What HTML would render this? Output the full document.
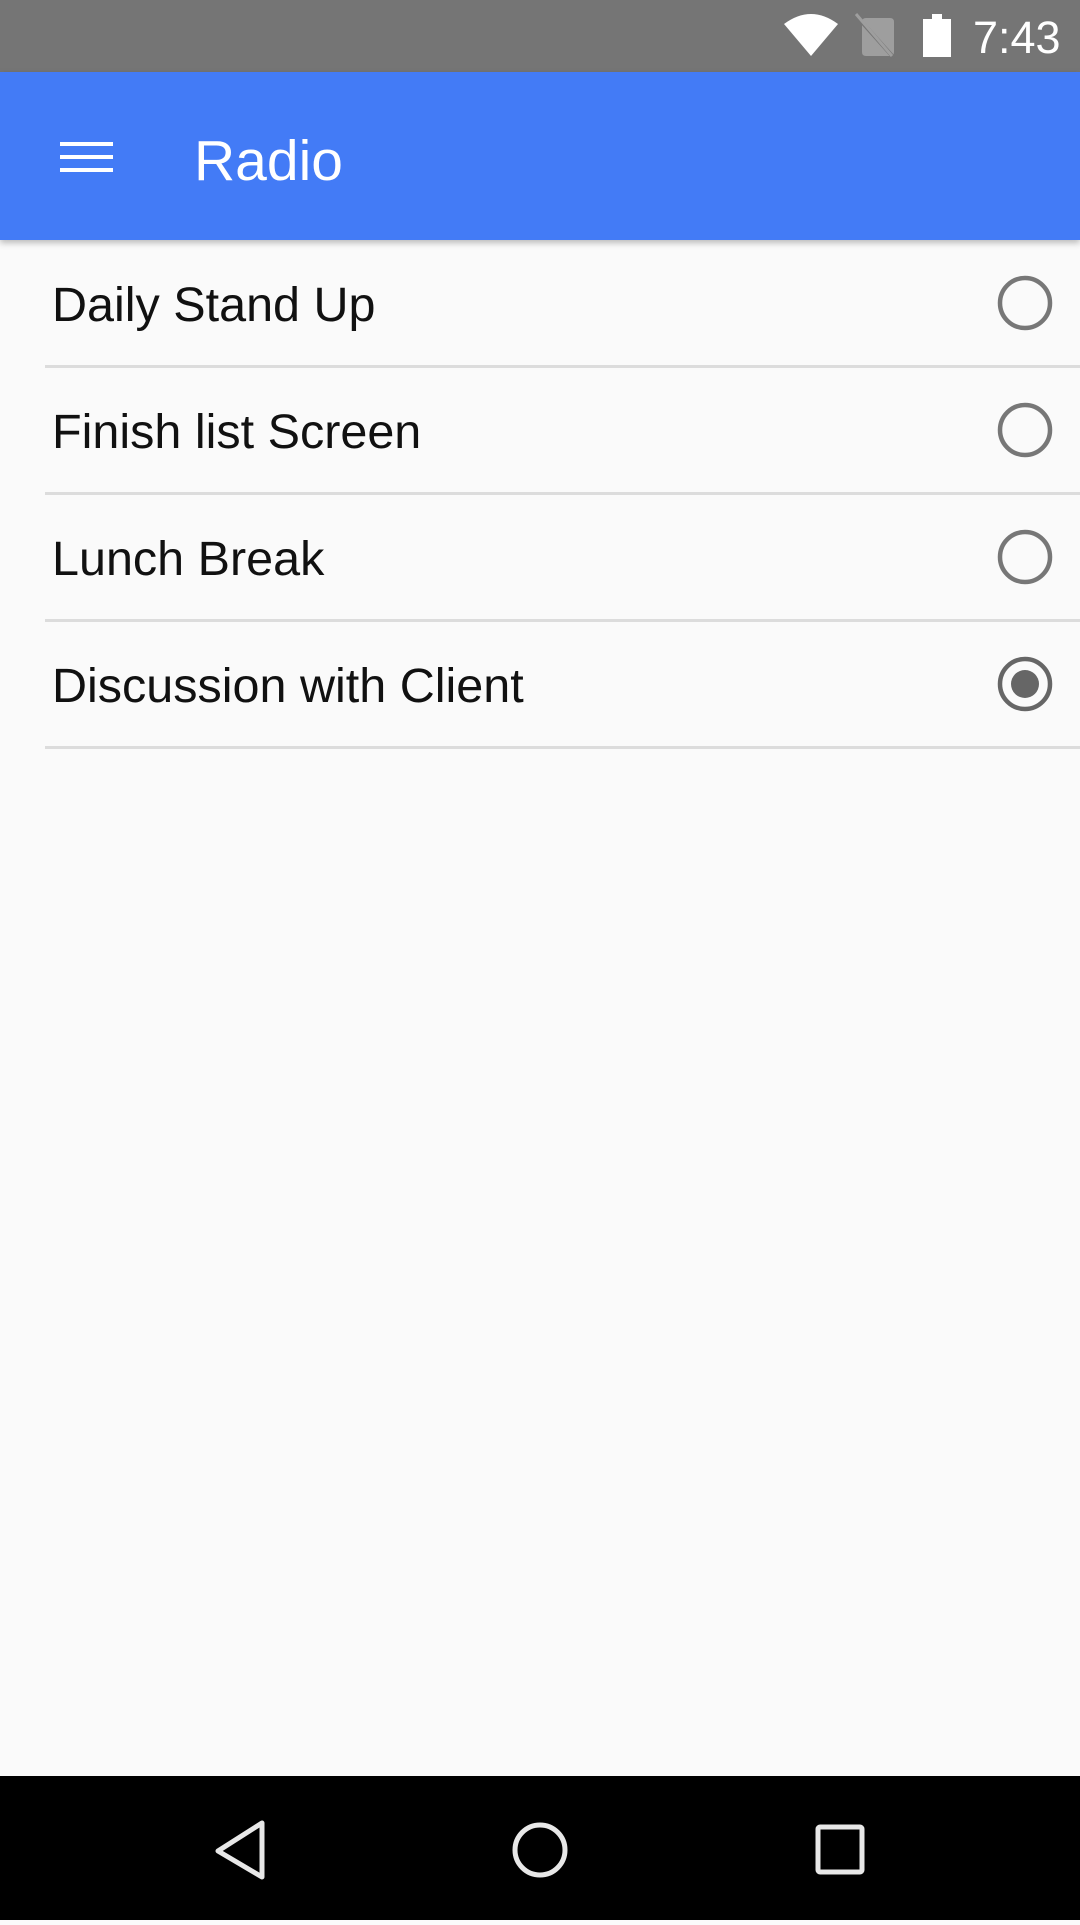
<!DOCTYPE html>
<html><head><meta charset="utf-8"><style>
body{margin:0;width:1080px;height:1920px;background:#fafafa;font-family:"Liberation Sans",sans-serif;position:relative;overflow:hidden}
.sb{position:absolute;left:0;top:0;width:1080px;height:72px;background:#757575}
.ab{position:absolute;left:0;top:72px;width:1080px;height:168px;background:#437bf6;box-shadow:0 3px 6px rgba(0,0,0,.25)}
.t{position:absolute;left:194px;top:124px;color:#fff;font-size:57px;line-height:74px}
.hb{position:absolute;left:60px;width:53px;height:4px;background:#fff}
.row{position:absolute;left:0;width:1080px;height:127px}
.row span{position:absolute;left:52px;top:34px;font-size:48.5px;color:#111;line-height:60px}
.div{position:absolute;left:45px;right:0;height:3px;background:#dcdcdc}
.nav{position:absolute;left:0;top:1776px;width:1080px;height:144px;background:#000}
</style></head><body>
<div class="sb">
<svg width="1080" height="72" style="position:absolute;left:0;top:0">
<path d="M784 24 Q811 4 838 24 L811 56 Z" fill="#fff"/>
<path d="M866 18 H890 Q894 18 894 22 V52 Q894 56 890 56 H866 Q862 56 862 52 V22 Q862 18 866 18Z" fill="#9e9e9e"/>
<path d="M860 20 L894 58" stroke="#757575" stroke-width="4"/>
<path d="M856 14 L892 56" stroke="#9e9e9e" stroke-width="3"/>
<rect x="932" y="14" width="10" height="6" fill="#fff"/>
<rect x="923" y="19" width="28" height="38" fill="#fff"/>
<text x="973" y="53" fill="#fff" font-size="45" font-family="Liberation Sans">7:43</text>
</svg>
</div>
<div class="ab">
<div class="hb" style="top:70px"></div><div class="hb" style="top:83px"></div><div class="hb" style="top:96px"></div>
</div>
<div class="t">Radio</div>

<div class="row" style="top:241px"><span>Daily Stand Up</span></div>
<div class="div" style="top:365px"></div>
<div class="row" style="top:368px"><span>Finish list Screen</span></div>
<div class="div" style="top:492px"></div>
<div class="row" style="top:495px"><span>Lunch Break</span></div>
<div class="div" style="top:619px"></div>
<div class="row" style="top:622px"><span>Discussion with Client</span></div>
<div class="div" style="top:746px"></div>

<svg width="1080" height="800" style="position:absolute;left:0;top:0">
<g fill="none" stroke="#777" stroke-width="4.5">
<circle cx="1025" cy="303" r="25"/>
<circle cx="1025" cy="430" r="25"/>
<circle cx="1025" cy="557" r="25"/>
<circle cx="1025" cy="684" r="25" stroke="#666"/>
</g>
<circle cx="1025" cy="684" r="14" fill="#666"/>
</svg>

<div class="nav">
<svg width="1080" height="144">
<g fill="none" stroke="#e8e8e8" stroke-width="5" stroke-linejoin="round">
<path d="M262 47 L262 101 L218 75 Z"/>
<circle cx="540" cy="74" r="25"/>
<rect x="818" y="51" width="44" height="45" rx="2"/>
</g>
</svg>
</div>
</body></html>
